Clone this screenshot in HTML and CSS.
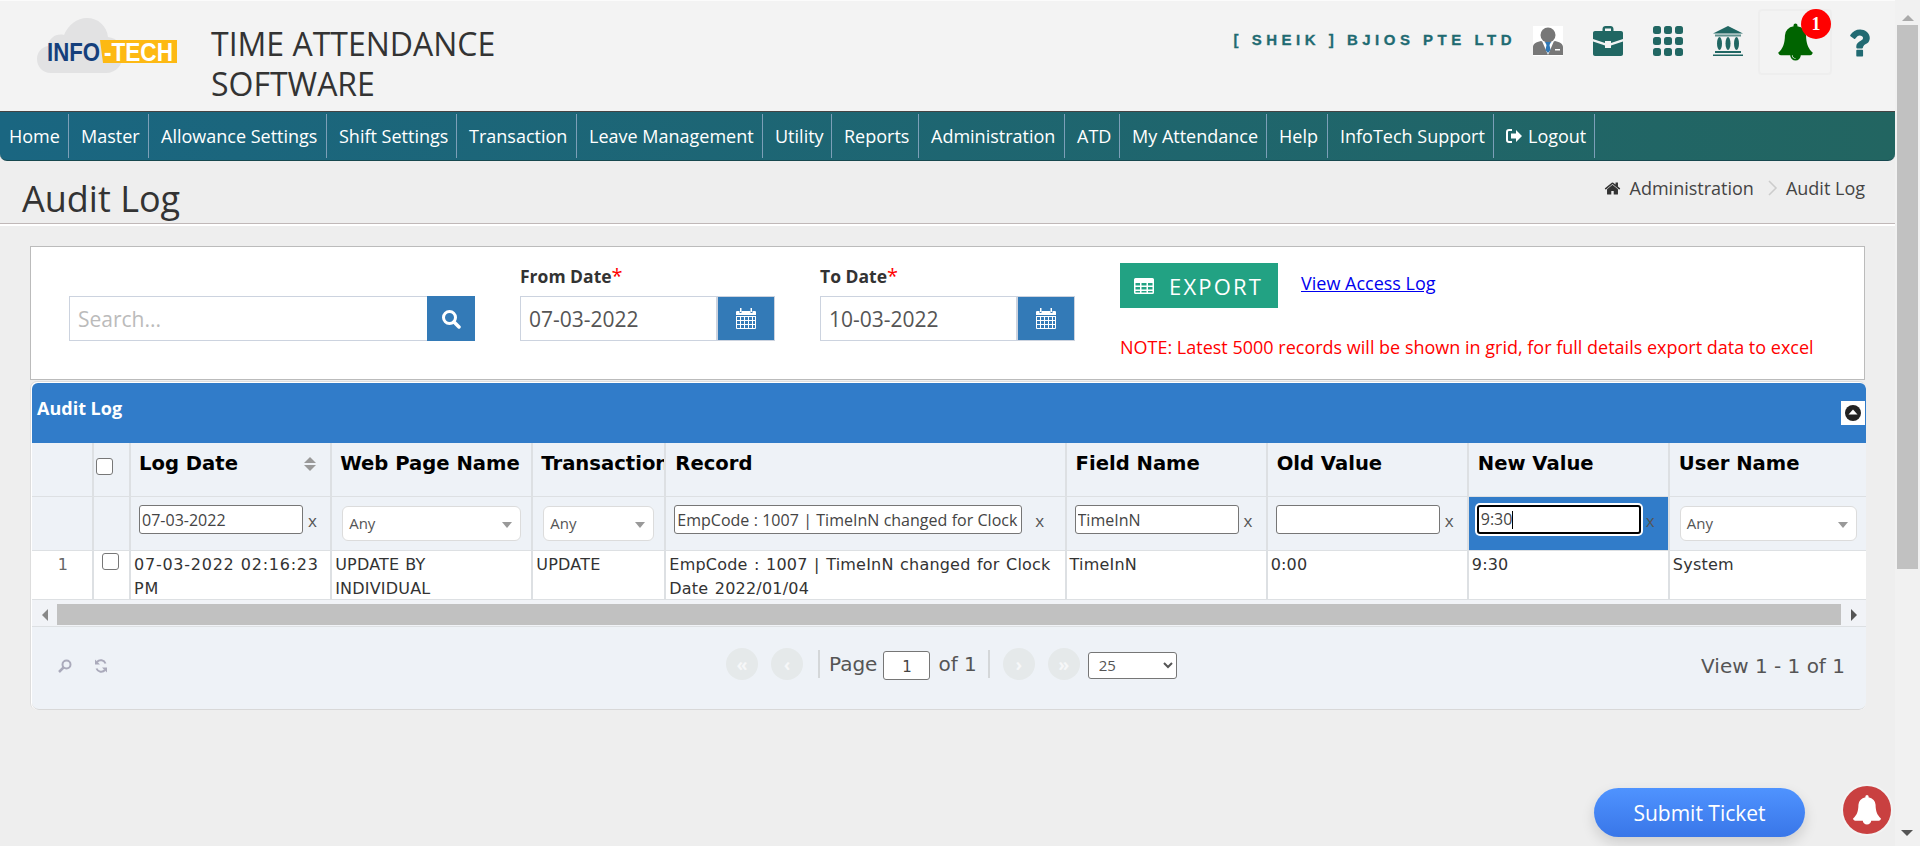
FILE: index.html
```html
<!DOCTYPE html>
<html lang="en">
<head>
<meta charset="utf-8">
<title>Audit Log</title>
<link rel="stylesheet" href="styles.css">
</head>
<body>
<div class="page">
  <div class="main">
    <header class="top">
      <svg class="logo" width="140" height="56" viewBox="0 0 140 56">
        <path fill="#e2e2e3" d="M14 55C5 55 0 48 0 41c0-7 5-12 11-13 1-8 8-13 16-11C31 7 40 0 50 0c11 0 20 8 21 19 9 1 15 8 15 18 0 10-7 18-17 18z"/>
        <path fill="#fdb913" d="M63 22h77v23H66z"/>
        <text class="logo-a" x="10" y="43" textLength="53" lengthAdjust="spacingAndGlyphs">INFO</text>
        <text class="logo-b" x="67" y="43" textLength="69" lengthAdjust="spacingAndGlyphs">-TECH</text>
      </svg>
      <h1 class="app-title">TIME ATTENDANCE<br>SOFTWARE</h1>
      <div class="top-right">
        <span class="company">[ SHEIK ] BJIOS PTE LTD</span>
        <svg class="t-icon user-pic" width="30" height="30" viewBox="0 0 30 30">
          <rect width="30" height="30" fill="#fff"/>
          <ellipse cx="15" cy="9" rx="7.500" ry="7.500" fill="#777"/>
          <path fill="#777" d="M0 29v-8c0-3 3-5 8-6l7 3 7-3c5 1 8 3 8 6v8z"/>
          <path fill="#fff" d="M9 15l6 14 6-14-6 3z"/>
          <path fill="#2f78b7" d="M12 16h6l-1.500 3 1 5-2.500 3-2.500-3 1-5z"/>
          <rect x="22" y="23" width="5" height="1.500" fill="#fff"/>
        </svg>
        <svg class="t-icon" width="30" height="30" viewBox="0 0 30 30">
          <path fill="#216763" d="M9.500 5V3c0-1.700 1.300-3 3-3h5c1.700 0 3 1.300 3 3v2H28c1.100 0 2 .9 2 2v6l-12 4v-2h-6v2L0 13V7c0-1.100.9-2 2-2zm2.500 0h6V2.500h-6z"/>
          <path fill="#216763" d="M0 15.500l12 4V22h6v-2.500l12-4V28c0 1.100-.9 2-2 2H2c-1.100 0-2-.9-2-2z"/>
        </svg>
        <svg class="t-icon" width="30" height="30" viewBox="0 0 30 30">
          <g fill="#216763">
            <rect width="8" height="8" rx="2.500"/><rect x="11" width="8" height="8" rx="2.500"/><rect x="22" width="8" height="8" rx="2.500"/>
            <rect y="11" width="8" height="8" rx="2.500"/><rect x="11" y="11" width="8" height="8" rx="2.500"/><rect x="22" y="11" width="8" height="8" rx="2.500"/>
            <rect y="22" width="8" height="8" rx="2.500"/><rect x="11" y="22" width="8" height="8" rx="2.500"/><rect x="22" y="22" width="8" height="8" rx="2.500"/>
          </g>
        </svg>
        <svg class="t-icon" width="30" height="30" viewBox="0 0 30 30">
          <g fill="#216763">
            <path d="M15 0l15 7.500H0z"/>
            <rect x="2" y="8.500" width="26" height="2" opacity=".7"/>
            <ellipse cx="6.500" cy="17.500" rx="2.500" ry="6.500"/><ellipse cx="15" cy="17.500" rx="2.500" ry="6.500"/><ellipse cx="23.500" cy="17.500" rx="2.500" ry="6.500"/>
            <rect x="2" y="25" width="26" height="2"/>
            <rect y="28.500" width="30" height="1.500"/>
          </g>
        </svg>
        <div class="bell-box">
          <svg class="bell" width="37" height="38" viewBox="0 0 1792 1792">
            <path fill="#006400" d="M912 1696q0-16-16-16-59 0-101.500-42.500t-42.500-101.500q0-16-16-16t-16 16q0 73 51.500 124.500t124.500 51.500q16 0 16-16zm816-288q0 52-38 90t-90 38h-448q0 106-75 181t-181 75-181-75-75-181h-448q-52 0-90-38t-38-90q50-42 91-88t85-119.500 74.500-158.500 50-206 19.500-260q0-152 117-282.500t307-158.500q-8-19-8-39 0-40 28-68t68-28 68 28 28 68q0 20-8 39 190 28 307 158.500t117 282.500q0 139 19.500 260t50 206 74.500 158.500 85 119.500 91 88z"/>
          </svg>
          <span class="badge">1</span>
        </div>
        <svg class="t-icon help" width="38" height="38" viewBox="0 0 1792 1792">
          <path fill="#216a72" d="M1088 1256v240q0 16-12 28t-28 12h-240q-16 0-28-12t-12-28v-240q0-16 12-28t28-12h240q16 0 28 12t12 28zm316-600q0 54-15.500 101t-35 76.500-55 59.500-57.500 43.500-61 35.500q-41 23-68.500 65t-27.500 67q0 17-12 32.500t-28 15.500h-240q-15 0-25.500-18.500t-10.500-37.500v-45q0-83 65-156.500t143-108.500q59-27 84-56t25-76q0-42-46.500-74t-107.500-32q-65 0-108 29-35 25-107 115-13 16-31 16-12 0-25-8l-164-125q-13-10-15.500-25t5.500-28q160-266 464-266 80 0 161 31t146 83 106 127.500 41 158.500z"/>
        </svg>
      </div>
    </header>

    <nav class="nav">
      <a class="nav-item">Home</a>
      <a class="nav-item">Master</a>
      <a class="nav-item">Allowance Settings</a>
      <a class="nav-item">Shift Settings</a>
      <a class="nav-item">Transaction</a>
      <a class="nav-item">Leave Management</a>
      <a class="nav-item">Utility</a>
      <a class="nav-item">Reports</a>
      <a class="nav-item">Administration</a>
      <a class="nav-item">ATD</a>
      <a class="nav-item">My Attendance</a>
      <a class="nav-item">Help</a>
      <a class="nav-item">InfoTech Support</a>
      <a class="nav-item">
        <svg class="logout-icon" width="16" height="14" viewBox="0 0 16 14">
          <path fill="none" stroke="#fff" stroke-width="2" d="M6 1H3a2 2 0 0 0-2 2v8a2 2 0 0 0 2 2h3"/>
          <path fill="#fff" d="M5 4.500h5V1l6 6-6 6V9.500H5z"/>
        </svg>Logout</a>
    </nav>

    <div class="title-row">
      <h2 class="page-title">Audit Log</h2>
      <div class="crumbs">
        <svg width="17" height="17" viewBox="0 0 1792 1792"><path fill="#333" d="M1472 992v480q0 26-19 45t-45 19h-384v-384h-256v384h-384q-26 0-45-19t-19-45v-480q0-1 .5-3t.5-3l575-474 575 474q1 2 1 6zm223-69l-62 74q-8 9-21 11h-3q-13 0-21-7l-692-577-692 577q-12 8-24 7-13-2-21-11l-62-74q-8-10-7-23.500t11-21.500l719-599q32-26 76-26t76 26l244 204v-195q0-14 9-23t23-9h192q14 0 23 9t9 23v408l219 182q10 8 11 21.500t-7 23.500z"/></svg>
        <span class="crumb-home">Administration</span>
        <svg class="crumb-sep" width="10" height="16" viewBox="0 0 10 16"><path fill="none" stroke="#ccc" stroke-width="1.500" d="M1 1l7 7-7 7"/></svg>
        <span>Audit Log</span>
      </div>
    </div>

    <section class="filters">
      <div class="search-group">
        <input class="field search-input" placeholder="Search...">
        <button class="addon search-btn">
          <svg width="20" height="20" viewBox="0 0 20 20"><circle cx="8.500" cy="8.500" r="6" fill="none" stroke="#fff" stroke-width="3"/><path stroke="#fff" stroke-width="3.500" stroke-linecap="round" d="M13 13l5 5"/></svg>
        </button>
      </div>
      <div class="date-col">
        <label class="date-label">From Date<span class="req">*</span></label>
        <div class="date-group">
          <input class="field date-input" value="07-03-2022">
          <button class="addon cal-btn">
            <svg width="20" height="21" viewBox="0 0 20 21"><g fill="#fff"><path d="M0 4a1 1 0 0 1 1-1h2.500v2h2V3h9v2h2V3H19a1 1 0 0 1 1 1v3H0z"/><rect x="4" y="0" width="1.500" height="4"/><rect x="14.500" y="0" width="1.500" height="4"/><path fill-rule="evenodd" d="M0 8h20v12a1 1 0 0 1-1 1H1a1 1 0 0 1-1-1zm4 1H1v3h3zm4 0H5v3h3zm4 0H9v3h3zm4 0h-3v3h3zm3 0h-2v3h2zM4 13H1v3h3zm4 0H5v3h3zm4 0H9v3h3zm4 0h-3v3h3zm3 0h-2v3h2zM4 17H1v3h3zm4 0H5v3h3zm4 0H9v3h3zm4 0h-3v3h3zm3 0h-2v3h2z"/></g></svg>
          </button>
        </div>
      </div>
      <div class="date-col">
        <label class="date-label">To Date<span class="req">*</span></label>
        <div class="date-group">
          <input class="field date-input" value="10-03-2022">
          <button class="addon cal-btn">
            <svg width="20" height="21" viewBox="0 0 20 21"><g fill="#fff"><path d="M0 4a1 1 0 0 1 1-1h2.500v2h2V3h9v2h2V3H19a1 1 0 0 1 1 1v3H0z"/><rect x="4" y="0" width="1.500" height="4"/><rect x="14.500" y="0" width="1.500" height="4"/><path fill-rule="evenodd" d="M0 8h20v12a1 1 0 0 1-1 1H1a1 1 0 0 1-1-1zm4 1H1v3h3zm4 0H5v3h3zm4 0H9v3h3zm4 0h-3v3h3zm3 0h-2v3h2zM4 13H1v3h3zm4 0H5v3h3zm4 0H9v3h3zm4 0h-3v3h3zm3 0h-2v3h2zM4 17H1v3h3zm4 0H5v3h3zm4 0H9v3h3zm4 0h-3v3h3zm3 0h-2v3h2z"/></g></svg>
          </button>
        </div>
      </div>
      <div class="export-col">
        <div class="export-row">
          <button class="export-btn">
            <svg width="20" height="16" viewBox="0 0 20 16"><path fill="#fff" fill-rule="evenodd" d="M1.500 0h17A1.500 1.500 0 0 1 20 1.500v13a1.500 1.500 0 0 1-1.500 1.500h-17A1.500 1.500 0 0 1 0 14.500v-13A1.500 1.500 0 0 1 1.500 0zM1.500 5v2.500h4.500V5zm6 0v2.500h5V5zm6.500 0v2.500h4.500V5zM1.500 9v2.500h4.500V9zm6 0v2.500h5V9zm6.500 0v2.500h4.500V9zM1.500 13v1.500h4.500V13zm6 0v1.500h5V13zm6.500 0v1.500h4.500V13z"/></svg>
            EXPORT
          </button>
          <a class="access-link" href="#">View Access Log</a>
        </div>
        <p class="note">NOTE: Latest 5000 records will be shown in grid, for full details export data to excel</p>
      </div>
    </section>

    <section class="grid">
      <div class="grid-head">
        <span class="grid-title">Audit Log</span>
        <span class="collapse"><svg width="16" height="16" viewBox="0 0 16 16"><circle cx="8" cy="8" r="8" fill="#222"/><path fill="#fff" d="M8 4.500l4.500 5h-9z"/></svg></span>
      </div>
      <div class="table-wrap">
        <table class="tbl">
          <colgroup>
            <col class="c-num"><col class="c-chk"><col class="c-200"><col class="c-200"><col class="c-tx"><col class="c-rec"><col class="c-200"><col class="c-200"><col class="c-200"><col class="c-last">
          </colgroup>
          <thead>
            <tr class="row-head">
              <th></th>
              <th class="chk-cell"><input type="checkbox" class="chk"></th>
              <th><span class="th-inner">Log Date<span class="sort"><i class="up"></i><i class="down"></i></span></span></th>
              <th>Web Page Name</th>
              <th>Transaction</th>
              <th class="th-r">Record</th>
              <th class="th-r">Field Name</th>
              <th class="th-r">Old Value</th>
              <th class="th-r">New Value</th>
              <th class="th-r last">User Name</th>
            </tr>
            <tr class="row-filter">
              <td></td>
              <td></td>
              <td><div class="flt"><input class="flt-input" value="07-03-2022"><span class="clr">x</span></div></td>
              <td><div class="sel">Any</div></td>
              <td><div class="sel">Any</div></td>
              <td><div class="flt"><input class="flt-input wide" value="EmpCode : 1007 | TimeInN changed for Clock Date 2022/01/04"><span class="clr wide-x">x</span></div></td>
              <td><div class="flt"><input class="flt-input" value="TimeInN"><span class="clr">x</span></div></td>
              <td><div class="flt"><input class="flt-input"><span class="clr">x</span></div></td>
              <td class="active"><div class="flt"><div class="flt-input focus">9:30<span class="caret"></span></div><span class="clr">x</span></div></td>
              <td class="last"><div class="sel">Any</div></td>
            </tr>
          </thead>
          <tbody>
            <tr class="row-data">
              <td class="num"><div class="cell">1</div></td>
              <td class="chk-data"><input type="checkbox" class="chk"></td>
              <td><div class="cell cell-date">07-03-2022 02:16:23 PM</div></td>
              <td><div class="cell">UPDATE BY INDIVIDUAL</div></td>
              <td><div class="cell">UPDATE</div></td>
              <td><div class="cell cell-rec">EmpCode : 1007 | TimeInN changed for Clock Date 2022/01/04</div></td>
              <td><div class="cell">TimeInN</div></td>
              <td><div class="cell">0:00</div></td>
              <td><div class="cell">9:30</div></td>
              <td class="last"><div class="cell">System</div></td>
            </tr>
          </tbody>
        </table>
      </div>
      <div class="hscroll">
        <span class="h-arrow"><i class="tri-left"></i></span>
        <span class="h-thumb"></span>
        <span class="h-arrow"><i class="tri-right"></i></span>
      </div>
      <div class="pager">
        <div class="pager-tools">
          <svg width="16" height="16" viewBox="0 0 16 16"><circle cx="9.500" cy="6.500" r="4" fill="none" stroke="#aab" stroke-width="2"/><path stroke="#aab" stroke-width="2.500" d="M6.500 9.500L2 14"/></svg>
          <svg width="16" height="16" viewBox="0 0 16 16"><path fill="none" stroke="#aab" stroke-width="2" d="M12.500 5.500A5 5 0 0 0 4 4M3.500 10.500A5 5 0 0 0 12 12"/><path fill="#aab" d="M2 1.500v5h5zM14 14.500v-5H9z"/></svg>
        </div>
        <div class="pager-center">
          <span class="circle">«</span>
          <span class="circle">‹</span>
          <span class="vsep"></span>
          <span class="pg-text">Page</span>
          <input class="pg-input" value="1">
          <span class="pg-text">of 1</span>
          <span class="vsep"></span>
          <span class="circle">›</span>
          <span class="circle">»</span>
          <select class="pg-size"><option>25</option></select>
        </div>
        <div class="pager-view">View 1 - 1 of 1</div>
      </div>
    </section>
  </div>

  <aside class="vscroll">
    <i class="v-up"></i>
    <span class="v-thumb"></span>
    <i class="v-down"></i>
  </aside>

  <button class="ticket">Submit Ticket</button>
  <div class="alert">
    <svg width="30" height="32" viewBox="0 0 1792 1792"><path fill="#fff" d="M896 1760q-106 0-181-75t-75-181h512q0 106-75 181t-181 75zm832-352q0 52-38 90t-90 38H192q-52 0-90-38t-38-90q50-42 91-88t85-119.500 74.500-158.500 50-206 19.500-260q0-152 117-282.500t307-158.500q-8-19-8-39 0-40 28-68t68-28 68 28 28 68q0 20-8 39 190 28 307 158.500t117 282.500q0 139 19.500 260t50 206 74.500 158.500 85 119.500 91 88z"/></svg>
  </div>
</div>
</body>
</html>
```
FILE: styles.css
```css
* { box-sizing: border-box; }
html, body { margin: 0; padding: 0; height: 100%; overflow: hidden; }
body { font-family: "Open Sans", "Noto Sans", sans-serif; color: #333; background: #eee; }
.page { position: relative; display: flex; width: 1920px; height: 846px; overflow: hidden; }
.main { width: 1895px; flex: none; }

.top { display: flex; height: 111px; background: #f3f3f3; border-top: 1px solid #fbfbfb; padding-left: 37px; }
.logo { margin-top: 17px; flex: none; overflow: visible; }
.logo-a { font: 700 25px "Liberation Sans", sans-serif; fill: #153f7c; }
.logo-b { font: 700 25px "Liberation Sans", sans-serif; fill: #fff; }
.app-title { margin: 23px 0 0 34px; font-size: 32px; line-height: 40px; font-weight: 400; color: #333; }
.top-right { margin-left: auto; display: flex; align-items: flex-start; }
.company { margin: 29px 17px 0 0; font: 700 15px/20px "Liberation Sans", sans-serif; letter-spacing: 4.500px; -webkit-text-stroke: .3px #1f6b72; color: #1f6b72; white-space: nowrap; }
.t-icon { flex: none; margin: 25px 30px 0 0; }
.user-pic { margin-right: 30px; }
.bell-box { position: relative; width: 74px; height: 66px; margin: 8px 8px 0 -15px; border: 2px solid #eee; border-radius: 4px; flex: none; }
.bell { position: absolute; left: 17px; top: 12px; }
.badge { position: absolute; left: 41px; top: -2px; width: 30px; height: 30px; border-radius: 50%; background: #f00; color: #fff; font: 700 18px/30px "Liberation Serif", serif; text-align: center; }
.help { margin: 23px 17px 0 0; }

.nav { display: grid; grid-template-columns: 69px 80px 178px 130px 120px 186px 69px 87px 146px 55px 147px 61px 166px 101px; height: 50px; padding: 2px 0; border-top: 1px solid #444; border-bottom: 1px solid #17484f; border-radius: 0 0 7px 7px; background: linear-gradient(90deg, #1a6681, #226561); }
.nav-item { display: flex; align-items: center; padding-left: 12px; border-right: 1px solid #7c9fb8; color: #fff; font-size: 18px; white-space: nowrap; }
.nav-item:first-child { padding-left: 9px; }
.logout-icon { margin-right: 6px; }

.title-row { display: flex; justify-content: space-between; height: 63px; padding: 0 30px 0 22px; border-bottom: 1px solid #c0b8b8; box-shadow: 0 1px 0 #fff, 0 2px 0 #fff; }
.page-title { margin: 13px 0 0; font-size: 36px; line-height: 50px; font-weight: 400; color: #333; }
.crumbs { display: flex; align-items: center; height: 54px; font-size: 18px; color: #444; }
.crumb-home { margin-left: 9px; }
.crumb-sep { margin: 0 8px 0 14px; }

.filters { display: flex; gap: 45px; height: 134px; margin: 22px 30px 0; padding: 0 0 0 38px; background: #fff; border: 1px solid #bbb; }
.field { height: 45px; border: 1px solid #ccd3df; border-right: 0; padding: 0 8px; font: 21px "Open Sans", sans-serif; color: #555; outline: 0; }
.field::placeholder { color: #bbb; }
.search-group { display: flex; margin-top: 49px; }
.search-input { width: 358px; }
.addon { display: flex; align-items: center; justify-content: center; height: 45px; border: 0; padding: 0; background: #337ab7; }
.search-btn { width: 48px; }
.date-col { width: 255px; padding-top: 17px; }
.date-label { display: block; height: 32px; font-size: 17.500px; line-height: 24px; font-weight: 700; color: #333; }
.req { color: #f00; font-size: 20px; font-weight: 400; line-height: 20px; }
.date-group { display: flex; }
.date-input { width: 196px; }
.cal-btn { width: 59px; border: 2px solid #ccd3df; border-width: 1px 1px 1px 2px; }
.export-col { padding-top: 16px; }
.export-row { display: flex; align-items: center; }
.export-btn { display: flex; align-items: center; gap: 15px; width: 158px; height: 45px; padding: 0 0 0 14px; border: 0; background: #22a283; color: #fff; font: 22px "Open Sans", sans-serif; letter-spacing: 2.200px; }
.access-link { margin: -5px 0 0 23px; color: #00e; font-size: 18px; }
.note { margin: 27px 0 0; font-size: 18px; line-height: 24px; color: #f00; }

.grid { width: 1836px; margin: 1px 0 0 30px; padding: 1px 0 0 1px; border: 1px solid #ddd; border-width: 1px 0 0 1px; border-radius: 7px; background: #fff; overflow: hidden; }
.grid-head { display: flex; justify-content: space-between; height: 60px; padding: 0 1px 0 5px; background: #317cc9; border-radius: 6px 6px 0 0; }
.grid-title { margin-top: 13px; font-size: 18px; line-height: 24px; font-weight: 700; color: #fff; }
.collapse { display: flex; align-items: center; justify-content: center; width: 24px; height: 24px; margin-top: 18px; background: #fff; }

.table-wrap { overflow: hidden; }
.tbl { table-layout: fixed; width: 1835px; border-collapse: separate; border-spacing: 0; background: #eef2f7; }
.c-num { width: 62px; } .c-chk { width: 37px; } .c-200 { width: 201px; } .c-tx { width: 133px; } .c-rec { width: 400px; } .c-last { width: 197px; }
.tbl th, .tbl td { border-right: 2px solid #dde0e3; border-bottom: 1px solid #dde0e3; overflow: hidden; }
.tbl .last { border-right: 0; }
.row-head th { height: 54px; padding: 0 0 12px 8px; text-align: left; vertical-align: middle; white-space: nowrap; font: 700 19.600px "DejaVu Sans", sans-serif; color: #000; }
.row-head .th-r { padding-left: 9px; }
.row-head .chk-cell { padding: 0 0 11px; }
.th-inner { display: flex; justify-content: space-between; padding-right: 14px; }
.sort { display: flex; flex-direction: column; gap: 2px; justify-content: center; }
.sort .up { border: 6px solid transparent; border-top: 0; border-bottom: 6px solid #999; }
.sort .down { border: 6px solid transparent; border-bottom: 0; border-top: 6px solid #999; }
.chk { display: block; width: 17px; height: 17px; margin: 4px 0 0 2px; appearance: none; background: #fff; border: 1px solid #777; border-radius: 3px; }
.row-filter td { height: 54px; padding: 0 0 0 8px; vertical-align: top; }
.flt { display: flex; align-items: flex-start; margin-top: 8px; }
.flt-input { display: block; width: 164px; height: 29px; padding: 0 2px; border: 1px solid #767676; border-radius: 3px; background: #fff; font: 16px/24px "Open Sans", sans-serif; word-spacing: .2px; color: #444; outline: 0; flex: none; }
.flt-input.wide { width: 348px; }
.clr { margin: 4px 0 0 5px; font-size: 17px; line-height: 24px; color: #555; }
.wide-x { margin-left: 13px; }
.sel { position: relative; height: 35px; margin: 9px 10px 0 2px; padding: 0 6px; border: 1px solid #dcdcdc; border-radius: 6px; background: #fff; font-size: 15px; line-height: 32px; color: #555; }
.sel::after { content: ""; position: absolute; right: 8px; top: 15px; border: 5.500px solid transparent; border-bottom: 0; border-top: 6px solid #999; }
.row-filter .active { background: #317cc9; }
.focus { line-height: 25px; border: 2px solid #000; box-shadow: 0 0 0 2px #fff; }
.caret { display: inline-block; width: 1px; height: 18px; background: #000; vertical-align: -4px; }
.row-data td { height: 49px; padding: 0; vertical-align: top; background: #fff; }
.cell { height: 48px; padding: 2px 8px 0 3px; font: 16px/24px "DejaVu Sans", sans-serif; letter-spacing: .2px; word-spacing: .5px; color: #333; }
.cell-date { padding-right: 2px; letter-spacing: .75px; }
.cell-rec { word-spacing: 1.200px; }
.row-data .num .cell { padding: 2px 0 0 2px; text-align: center; color: #666; }
.chk-data .chk { margin: 2px 0 0 8px; }

.hscroll { display: flex; align-items: flex-start; height: 27px; padding-top: 4px; border-bottom: 1px solid #dde0e3; background: #f1f3f7; }
.h-arrow { display: flex; justify-content: center; align-items: center; width: 25px; height: 21px; flex: none; }
.h-thumb { flex: 1; height: 21px; background: #c1c1c1; }
.tri-left { border: 6px solid transparent; border-left: 0; border-right: 6px solid #888; }
.tri-right { border: 6px solid transparent; border-right: 0; border-left: 6px solid #555; }

.pager { position: relative; display: flex; align-items: center; justify-content: space-between; height: 83px; padding: 0 21px 0 25px; background: #eef2f7; border-bottom: 1px solid #d8d8d8; border-radius: 0 0 7px 7px; }
.pager-tools { display: flex; gap: 20px; margin-top: -4px; }
.pager-center { display: flex; align-items: center; position: absolute; left: 694px; top: 21px; }
.circle { display: flex; align-items: center; justify-content: center; width: 32px; height: 32px; margin-right: 13px; border-radius: 50%; background: #e5e9ea; color: #f6f7f8; font-size: 18px; font-weight: 700; }
.vsep { width: 2px; height: 28px; margin-right: 9px; background: #d4d7d9; }
.circle + .vsep { margin-left: 2px; }
.pg-text { font: 20px "DejaVu Sans", sans-serif; color: #555; }
.pg-input { width: 47px; height: 29px; margin: 2px 8px 0 6px; border: 1px solid #767676; border-radius: 3px; background: #fff; text-align: center; font: 15px "DejaVu Sans", sans-serif; color: #444; padding: 3px 0 0; }
.pg-text + .vsep { margin-left: 11px; margin-right: 13px; }
.pg-size { width: 89px; height: 27px; margin: 2px 0 0 -5px; border: 1px solid #767676; border-radius: 3px; background: #fff; font: 15px "Open Sans", sans-serif; color: #555; padding-left: 6px; }
.pager-view { margin-top: -4px; font: 20px "DejaVu Sans", sans-serif; color: #555; }

.vscroll { position: relative; flex: 1; background: #f1f1f1; }
.v-up { position: absolute; left: 7px; top: 15px; border: 6px solid transparent; border-top: 0; border-bottom: 6px solid #aaa; }
.v-down { position: absolute; left: 6px; top: 830px; border: 6px solid transparent; border-bottom: 0; border-top: 6px solid #555; }
.v-thumb { position: absolute; left: 2px; top: 25px; width: 21px; height: 544px; background: #c1c1c1; }

.ticket { position: absolute; left: 1594px; top: 788px; width: 211px; height: 49px; border: 0; border-radius: 25px; background: linear-gradient(180deg, #4f93ff, #3976e8); box-shadow: 0 6px 14px rgba(0,0,0,.14); color: #fff; font: 21px "Open Sans", sans-serif; }
.alert { position: absolute; left: 1843px; top: 786px; display: flex; align-items: center; justify-content: center; width: 48px; height: 48px; border-radius: 50%; background: #c94040; box-shadow: 0 0 0 2px #f3f3f3; }
```
